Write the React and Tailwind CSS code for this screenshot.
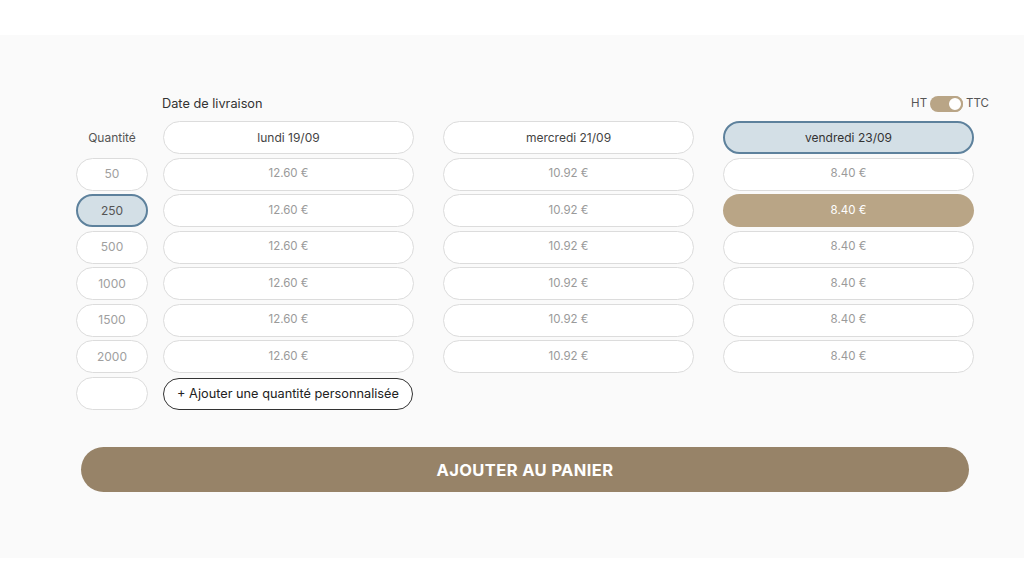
import React from "react";

const qtys = ["50", "250", "500", "1000", "1500", "2000"];
const cols = [
  { label: "lundi 19/09", price: "12.60 €", active: false },
  { label: "mercredi 21/09", price: "10.92 €", active: false },
  { label: "vendredi 23/09", price: "8.40 €", active: true },
];

export default function App() {
  return (
    <div className="w-[1024px] h-[587px] bg-white" style={{ fontFamily: "Inter, 'Open Sans', sans-serif" }}>
      <div className="h-[35px]" />
      <div className="bg-[#fafafa] h-[523px] pt-[59px] pl-[76px]">
        <div className="flex items-center h-[20px] w-[913px] mb-[7px]">
          <div className="w-[86px]" />
          <div className="text-[12.75px] text-[#333] flex-1">Date de livraison</div>
          <div className="flex items-center gap-[3px] text-[11.5px] text-[#555]">
            <span>HT</span>
            <div className="w-[33px] h-[16px] rounded-full bg-[#b9a586] flex items-center justify-end">
              <div className="w-[16px] h-[16px] rounded-full bg-white border-2 border-[#b9a586]" />
            </div>
            <span>TTC</span>
          </div>
        </div>
        <div className="flex">
          <div className="w-[72px] flex flex-col gap-[3.5px]">
            <div className="h-[33px] flex items-center justify-center text-[12px] text-[#555]">Quantité</div>
            {qtys.map((q) => (
              <div
                key={q}
                className={
                  q === "250"
                    ? "h-[33px] rounded-full border-2 border-[#5d819c] bg-[#d3dfe6] flex items-center justify-center text-[12px] text-[#555]"
                    : "h-[33px] rounded-full border border-[#dcdcdc] bg-white flex items-center justify-center text-[12px] text-[#a0a0a0]"
                }
              >
                {q}
              </div>
            ))}
            <div className="h-[33px] rounded-full border border-[#dcdcdc] bg-white" />
          </div>
          <div className="ml-[15px] flex gap-[29px]">
            {cols.map((c, i) => (
              <div key={c.label} className="w-[251px] flex flex-col gap-[3.5px]">
                <div
                  className={
                    c.active
                      ? "h-[33px] rounded-full border-2 border-[#5d819c] bg-[#d3dfe6] flex items-center justify-center text-[12px] text-[#333]"
                      : "h-[33px] rounded-full border border-[#dcdcdc] bg-white flex items-center justify-center text-[12px] text-[#444]"
                  }
                >
                  {c.label}
                </div>
                {qtys.map((q) => {
                  const sel = c.active && q === "250";
                  return (
                    <div
                      key={q}
                      className={
                        sel
                          ? "h-[33px] rounded-full bg-[#b9a586] flex items-center justify-center text-[11.5px] text-white"
                          : "h-[33px] rounded-full border border-[#dcdcdc] bg-white flex items-center justify-center text-[11.5px] text-[#9a9a9a]"
                      }
                    >
                      {c.price}
                    </div>
                  );
                })}
                {i === 0 && (
                  <div className="mt-[1px] w-[250px] h-[32px] rounded-full border border-[#333] bg-white flex items-center justify-center text-[12.75px] text-[#222]">
                    + Ajouter une quantité personnalisée
                  </div>
                )}
              </div>
            ))}
          </div>
        </div>
        <div className="mt-[37px] ml-[5px] w-[888px] h-[45px] pt-[3px] rounded-full bg-[#978368] flex items-center justify-center text-white font-bold text-[16.5px] tracking-[0.4px]">
          AJOUTER AU PANIER
        </div>
      </div>
    </div>
  );
}
